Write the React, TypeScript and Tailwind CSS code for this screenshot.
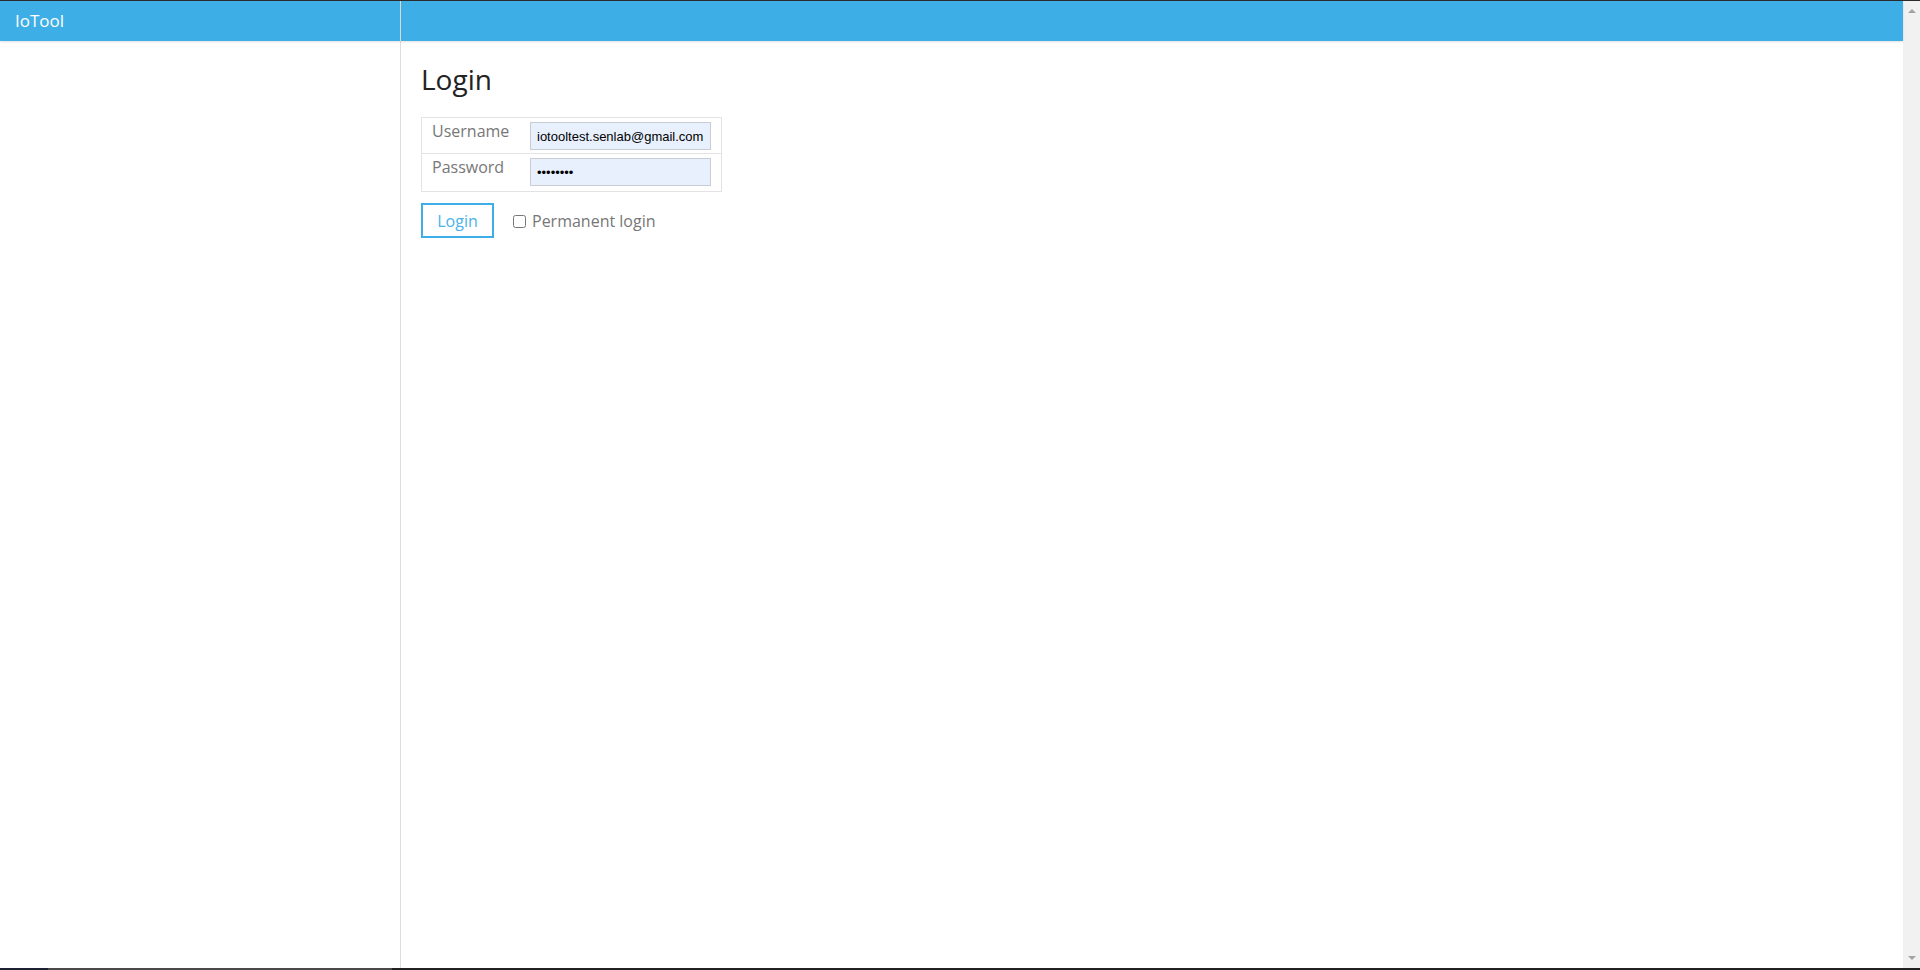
import { useState } from "react";

const font = "font-['Open_Sans',sans-serif]";

const LoginForm = () => {
  const [username, setUsername] = useState("iotooltest.senlab@gmail.com");
  const [password, setPassword] = useState("password");
  const [permanent, setPermanent] = useState(false);

  return (
    <div className={`pl-[20px] pt-[19px] ${font}`}>
      <h1 className="text-[28px] leading-[38px] text-[#222]">Login</h1>

      <div className="mt-[19px] w-[301px] border border-[#e3e3e3]">
        <div className="flex h-[36px] border-b border-[#e3e3e3]">
          <div className="w-[108px] pl-[10px] pt-[2px] text-[16px] leading-[22px] text-[#777]">Username</div>
          <input
            value={username}
            onChange={(e) => setUsername(e.target.value)}
            className="mt-[4px] h-[28px] w-[181px] border border-[#c9cdd3] bg-[#e8f0fe] px-[6px] font-['Liberation_Sans',Arial,sans-serif] text-[13px] text-black outline-none"
          />
        </div>
        <div className="flex h-[37px]">
          <div className="w-[108px] pl-[10px] pt-[2px] text-[16px] leading-[22px] text-[#777]">Password</div>
          <input
            type="password"
            value={password}
            onChange={(e) => setPassword(e.target.value)}
            className="mt-[4px] h-[28px] w-[181px] border border-[#c9cdd3] bg-[#e8f0fe] px-[6px] font-['Liberation_Sans',Arial,sans-serif] text-[13px] text-black outline-none"
          />
        </div>
      </div>

      <div className="mt-[11px] flex items-center">
        <button className="h-[35px] w-[73px] border-2 border-[#3daee6] bg-white text-[16px] text-[#4ab2e8]">
          Login
        </button>
        <label className="ml-[19px] flex items-center text-[16px] text-[#777]">
          <input
            type="checkbox"
            checked={permanent}
            onChange={(e) => setPermanent(e.target.checked)}
            className="m-0 mt-[2px] h-[13px] w-[13px]"
          />
          <span className="ml-[6px]">Permanent login</span>
        </label>
      </div>
    </div>
  );
};

export default function App() {
  return (
    <div className="flex h-[970px] w-[1920px] flex-col overflow-hidden bg-white">
      <div className="h-px bg-[#2b2b2b]" />
      <div className="flex min-h-0 flex-1">
        <div className="flex min-w-0 flex-1 flex-col">
          <header className="relative z-10 flex h-[40px] bg-[#3daee6] shadow-[0_1px_2px_rgba(0,0,0,0.12)]">
            <div className={`flex w-[401px] items-center border-r border-[#d9d9d9] pl-[15px] text-[17px] text-white ${font}`}>
              IoTool
            </div>
            <div className="flex-1" />
          </header>
          <div className="flex min-h-0 flex-1">
            <aside className="w-[401px] border-r border-[#dcdcdc]" />
            <main className="flex-1">
              <LoginForm />
            </main>
          </div>
        </div>
        <div className="flex w-[17px] flex-col items-center justify-between bg-[#f1f1f1] py-[8px]">
          <div className="h-0 w-0 border-x-[4px] border-b-[4px] border-x-transparent border-b-[#a3a3a3]" />
          <div className="h-0 w-0 border-x-[4px] border-t-[4px] border-x-transparent border-t-[#a3a3a3]" />
        </div>
      </div>
      <div className="flex h-[2px]">
        <div className="w-[48px] bg-[#1c2230]" />
        <div className="w-[344px] bg-[#4a4a4a]" />
        <div className="flex-1 bg-[#222]" />
      </div>
    </div>
  );
}
